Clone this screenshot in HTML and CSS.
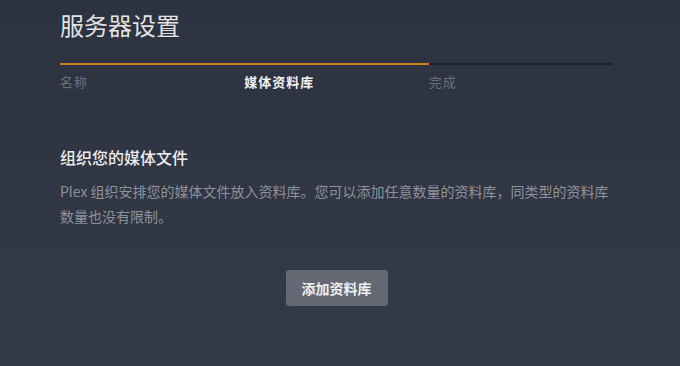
FILE: index.html
```html
<!DOCTYPE html>
<html lang="zh-CN">
<head>
    <meta charset="UTF-8">
    <title>服务器设置</title>
    <link rel="stylesheet" href="styles.css">
</head>
<body>
    <div class="setup">
        <h1 class="title">服务器设置</h1>

        <div class="progress">
            <div class="progressFill"></div>
        </div>
        <div class="steps">
            <div class="step">名称</div>
            <div class="step active">媒体资料库</div>
            <div class="step">完成</div>
        </div>

        <div class="content">
            <h2 class="heading">组织您的媒体文件</h2>
            <p class="desc">Plex 组织安排您的媒体文件放入资料库。您可以添加任意数量的资料库，同类型的资料库数量也没有限制。</p>
            <div class="actions">
                <button class="addBtn">添加资料库</button>
            </div>
        </div>
    </div>
</body>
</html>
```

FILE: styles.css
```css
body {
  margin: 0;
  min-height: 100vh;
  background: linear-gradient(to bottom, #2c3240, #343a48);
  font-family: "Noto Sans CJK SC", "Noto Sans", sans-serif;
  color: #e5e5e5;
}

.setup {
  width: 553px;
  padding: 8px 0 0 60px;
}

.title {
  margin: 0;
  font-size: 24px;
  line-height: 34px;
  font-weight: 400;
  color: #e3e3e3;
}

/* progress bar */
.progress {
  margin-top: 21px;
  height: 2px;
  background: #1e222a;
}

.progressFill {
  width: 66.7%;
  height: 100%;
  background: #d17f19;
}

.steps {
  display: flex;
  margin-top: 8px;
}

.step {
  flex: 1;
  font-size: 13px;
  letter-spacing: 1px;
  line-height: 18px;
  color: #6c717b;
}

.step.active {
  color: #f2f2f2;
  font-weight: 700;
}

/* main block */
.content {
  padding-top: 55px;
}

.heading {
  margin: 0;
  font-size: 16px;
  line-height: 22px;
  font-weight: 500;
  color: #ececec;
}

.desc {
  margin: 11px 0 0;
  font-size: 14px;
  line-height: 25px;
  color: #8e939b;
}

.actions {
  display: flex;
  justify-content: center;
  margin-top: 41px;
}

.addBtn {
  width: 102px;
  height: 36px;
  border: none;
  border-radius: 3px;
  background: #646973;
  color: #f0f0f0;
  font: 700 14px "Noto Sans CJK SC", sans-serif;
}
```
